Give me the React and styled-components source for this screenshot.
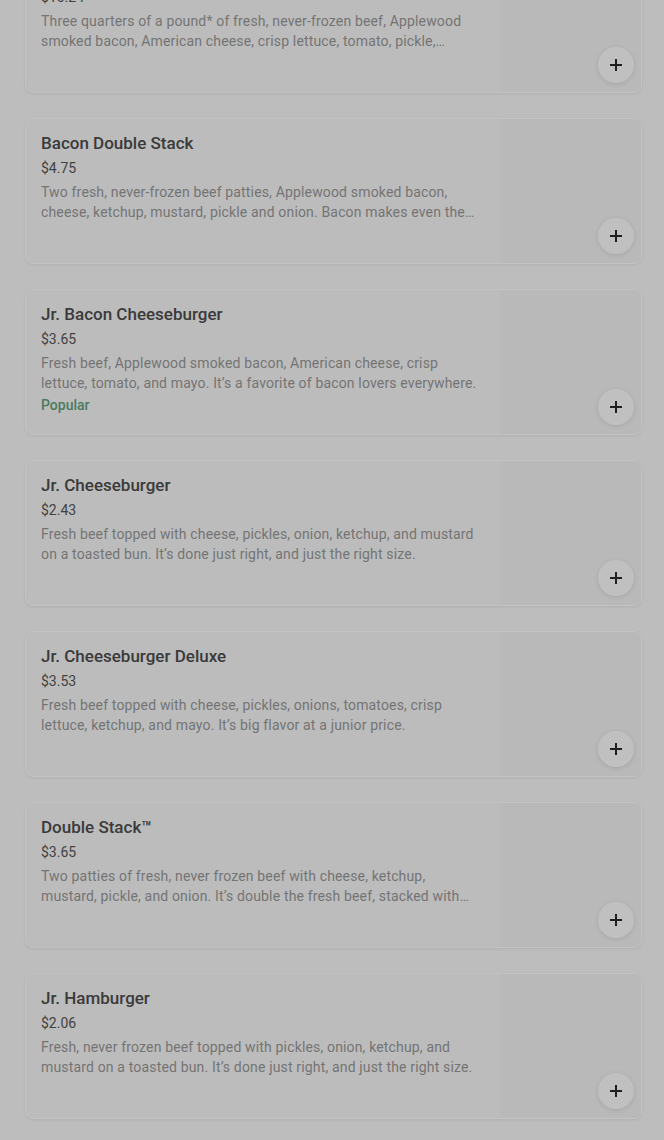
import React from 'react';
import styled, {createGlobalStyle} from 'styled-components';

const GlobalStyle = createGlobalStyle`
  html, body {
    margin: 0;
    padding: 0;
    background: #bdbdbd;
    overflow: hidden;
  }
  body {
    font-family: Roboto, "Liberation Sans", sans-serif;
  }
`;

const Page = styled.div`
  height: 1140px;
  overflow: hidden;
  background: #bdbdbd;
`;

const List = styled.div`
  display: flex;
  flex-direction: column;
  gap: 25px;
  margin: -53px 22px 0 25px;
`;

const Card = styled.div`
  display: flex;
  height: 146px;
  box-sizing: border-box;
  background: #bcbcbc;
  border: 1px solid #c3c3c3;
  border-radius: 8px;
  box-shadow: 0 1px 3px rgba(0, 0, 0, 0.07);
  overflow: hidden;
`;

const Info = styled.div`
  flex: 1;
  min-width: 0;
  padding: 12px 16px 0 15px;
`;

const Title = styled.h3`
  margin: 0;
  font-size: 17px;
  line-height: 24px;
  font-weight: 500;
  color: #3a3a3a;
`;

const Price = styled.div`
  margin-top: 4px;
  font-size: 14px;
  line-height: 18px;
  color: #424242;
`;

const Desc = styled.p`
  margin: 5px 0 0;
  font-size: 14px;
  line-height: 20px;
  letter-spacing: 0.16px;
  color: #747474;
  display: -webkit-box;
  -webkit-line-clamp: 2;
  -webkit-box-orient: vertical;
  overflow: hidden;
`;

const Tag = styled.div`
  margin-top: 2px;
  font-size: 14px;
  line-height: 20px;
  font-weight: 500;
  color: #4a7a5f;
`;

const Picture = styled.div`
  position: relative;
  width: 141px;
  flex-shrink: 0;
  background: #b9b9b9;
`;

const AddButton = styled.button`
  position: absolute;
  right: 7px;
  bottom: 9px;
  width: 36px;
  height: 36px;
  border: none;
  border-radius: 50%;
  background: #c0c0c0;
  box-shadow: 0 1px 5px rgba(0, 0, 0, 0.1);
  display: flex;
  align-items: center;
  justify-content: center;
  padding: 0;
  cursor: pointer;
`;

const items = [
  {
    name: 'Bacon Triple Stack',
    price: '$10.24',
    desc: 'Three quarters of a pound* of fresh, never-frozen beef, Applewood smoked bacon, American cheese, crisp lettuce, tomato, pickle, ketchup, mayo and onion.',
  },
  {
    name: 'Bacon Double Stack',
    price: '$4.75',
    desc: 'Two fresh, never-frozen beef patties, Applewood smoked bacon, cheese, ketchup, mustard, pickle and onion. Bacon makes even the best things better.',
  },
  {
    name: 'Jr. Bacon Cheeseburger',
    price: '$3.65',
    desc: 'Fresh beef, Applewood smoked bacon, American cheese, crisp lettuce, tomato, and mayo. It\u2019s a favorite of bacon lovers everywhere.',
    popular: true,
  },
  {
    name: 'Jr. Cheeseburger',
    price: '$2.43',
    desc: 'Fresh beef topped with cheese, pickles, onion, ketchup, and mustard on a toasted bun. It\u2019s done just right, and just the right size.',
  },
  {
    name: 'Jr. Cheeseburger Deluxe',
    price: '$3.53',
    desc: 'Fresh beef topped with cheese, pickles, onions, tomatoes, crisp lettuce, ketchup, and mayo. It\u2019s big flavor at a junior price.',
  },
  {
    name: 'Double Stack\u2122',
    price: '$3.65',
    desc: 'Two patties of fresh, never frozen beef with cheese, ketchup, mustard, pickle, and onion. It\u2019s double the fresh beef, stacked with cheese for twice the flavor.',
  },
  {
    name: 'Jr. Hamburger',
    price: '$2.06',
    desc: 'Fresh, never frozen beef topped with pickles, onion, ketchup, and mustard on a toasted bun. It\u2019s done just right, and just the right size.',
  },
  {
    name: 'Crispy Chicken Sandwich',
    price: '$2.49',
    desc: 'A juicy chicken breast, breaded and fried to a crispy golden brown, with crisp lettuce and mayo on a toasted bun.',
  },
];

const PlusIcon = () => (
  <svg width="12" height="12" viewBox="0 0 12 12">
    <path d="M6 1v10M1 6h10" stroke="#1f1f1f" strokeWidth="2" strokeLinecap="square" />
  </svg>
);

export default function App() {
  return (
    <Page>
      <GlobalStyle />
      <List>
        {items.map(item => (
          <Card key={item.name}>
            <Info>
              <Title>{item.name}</Title>
              <Price>{item.price}</Price>
              <Desc>{item.desc}</Desc>
              {item.popular && <Tag>Popular</Tag>}
            </Info>
            <Picture>
              <AddButton aria-label={`Add ${item.name}`}>
                <PlusIcon />
              </AddButton>
            </Picture>
          </Card>
        ))}
      </List>
    </Page>
  );
}
